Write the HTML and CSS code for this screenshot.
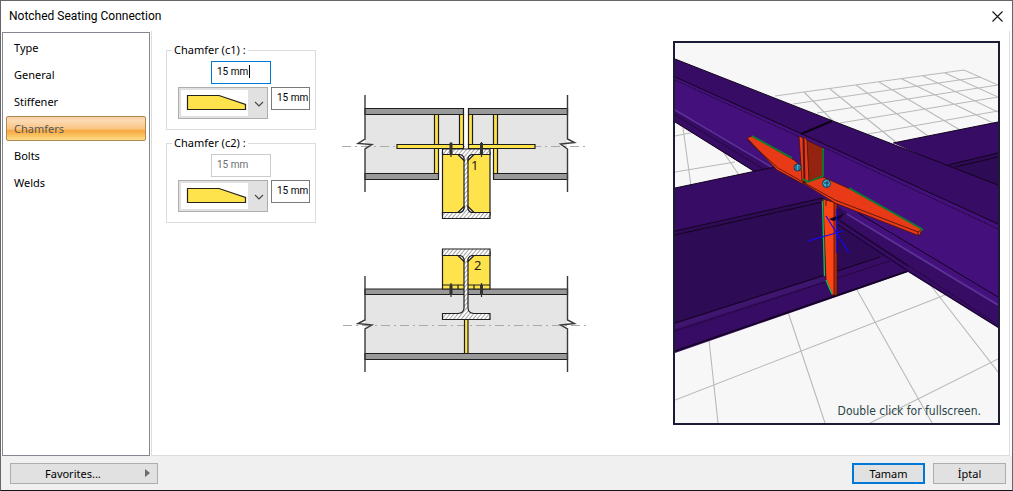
FILE: index.html
```html
<!DOCTYPE html>
<html lang="en">
<head>
<meta charset="utf-8">
<title>Notched Seating Connection</title>
<link rel="stylesheet" href="styles.css">
</head>
<body>
<div class="dialog">
  <header class="titlebar">
    <h1 class="title">Notched Seating Connection</h1>
    <button class="close" type="button" aria-label="Close">
      <svg width="11" height="11" viewBox="0 0 11 11"><path d="M.5 .5 10.500 10.500M10.500 .5 .5 10.500" fill="none" stroke="#111" stroke-width="1.100"/></svg>
    </button>
  </header>
  <div class="body">
    <nav class="sidebar">
      <button class="tab" type="button">Type</button>
      <button class="tab" type="button">General</button>
      <button class="tab" type="button">Stiffener</button>
      <button class="tab selected" type="button" aria-current="page">Chamfers</button>
      <button class="tab" type="button">Bolts</button>
      <button class="tab" type="button">Welds</button>
    </nav>
    <main class="page">
      <form class="groups">
        <fieldset class="group">
          <legend>Chamfer (c1) :</legend>
          <div class="field main-field focused"><input type="text" value="15 mm" aria-label="Chamfer c1 size"><span class="caret"></span></div>
          <div class="row">
            <div class="combo">
              <select aria-label="Chamfer c1 shape"><option aria-label="Straight"></option></select>
              <svg class="face" viewBox="0 0 90 32"><path fill="#fff" d="M3 3H70V29H3z"/><path d="M9.500 8.500H41L67.500 17.500V22.500H9.500z" fill="#ffe34d" stroke="#24221a" stroke-width="1.200"/><path d="M77 15l4 4 4-4" fill="none" stroke="#444" stroke-width="1.100"/></svg>
            </div>
            <div class="field side-field"><input type="text" value="15 mm" aria-label="Chamfer c1 height"></div>
          </div>
        </fieldset>
        <fieldset class="group">
          <legend>Chamfer (c2) :</legend>
          <div class="field main-field"><input type="text" value="15 mm" aria-label="Chamfer c2 size" disabled></div>
          <div class="row">
            <div class="combo">
              <select aria-label="Chamfer c2 shape"><option aria-label="Straight"></option></select>
              <svg class="face" viewBox="0 0 90 32"><path fill="#fff" d="M3 3H70V29H3z"/><path d="M9.500 8.500H41L67.500 17.500V22.500H9.500z" fill="#ffe34d" stroke="#24221a" stroke-width="1.200"/><path d="M77 15l4 4 4-4" fill="none" stroke="#444" stroke-width="1.100"/></svg>
            </div>
            <div class="field side-field"><input type="text" value="15 mm" aria-label="Chamfer c2 height"></div>
          </div>
        </fieldset>
      </form>
      <div class="diagram">
        <svg width="250" height="290" viewBox="340 90 250 290" role="img" aria-label="Connection sections 1 and 2">
          <defs>
            <pattern id="hatch" width="3" height="3" patternUnits="userSpaceOnUse" patternTransform="rotate(40)"><path fill="#fff" d="M0 0H3V3H0z"/><path stroke="#333" stroke-width=".9" d="M0 0V3"/></pattern>
          </defs>
          <g stroke="#1e1e1e" stroke-width="1.200">
            <path fill="#e5e5e5" stroke="none" d="M365 114H463V146H438V174H365zM469 114H567V174H494V146H469z"/>
            <path fill="#999" d="M365 108.500H463.500V114.500H365zM468.500 108.500H567.500V114.500H468.500zM365 173.500H438.500V179.500H365zM493.500 173.500H567.500V179.500H493.500z"/>
            <path fill="#ffe34d" d="M434.500 114.500H438.500V173.500H434.500zM459.500 114.500H463.500V144.500H459.500zM468.500 114.500H472.500V144.500H468.500zM493.500 114.500H497.500V173.500H493.500z"/>
            <path fill="none" stroke="#aaa" stroke-width="1" stroke-dasharray="9 4 2 4" d="M342 146.500H587"/>
            <path fill="#ffe34d" d="M397 144.500H463.500V148.500H397zM468.500 144.500H535V148.500H468.500z"/>
            <path fill="#ffe34d" d="M442.500 152H490V215H442.500z"/>
            <path fill="url(#hatch)" d="M442.500 149H490V154.500H474Q468 155 468 161V206Q468 212 474 212.500H490V218.500H442.500V212.500H458Q464 212 464 206V161Q464 155 458 154.500H442.500z"/>
            <path fill="#fff" d="M458 154.500 464 160.500V158Q463 155 460 154.500zM474 154.500 468 160.500V158Q469 155 472 154.500zM458 212.500 464 206.500V209Q463 212 460 212.500zM474 212.500 468 206.500V209Q469 212 472 212.500z"/>
            <path stroke="#333" stroke-width="3" d="M451 143V155M481.500 143V155"/>
            <path stroke="#333" stroke-width="1.200" d="M451 142V157M481.500 142V157"/>
            <g fill="none" stroke="#3a3a3a" stroke-width="1.400"><path d="M365 95V139L358 143.500 372 144.500 365 149V192M567.500 95V139L574.500 142.500 560.500 144 567.500 149V192"/></g>
          </g>
          <g stroke="#1e1e1e" stroke-width="1.200">
            <path fill="#e5e5e5" stroke="none" d="M365 294H567V354H365z"/>
            <path fill="none" stroke="#aaa" stroke-width="1" stroke-dasharray="9 4 2 4" d="M343 325.500H587"/>
            <path fill="#999" d="M365 289H567.500V294.500H365zM365 353.500H567.500V359.500H365z"/>
            <path fill="#ffe34d" d="M442.500 252H490V285H442.500zM442.500 285H490V289H442.500zM464.500 319.500H468V353.500H464.500z"/>
            <path d="M458 285V289M474 285V289"/>
            <path fill="url(#hatch)" d="M442.500 249H490V255.500H474Q468 256 468 262V308Q468 313 474 313.500H490V319.500H442.500V313.500H458Q464 313 464 308V262Q464 256 458 255.500H442.500z"/>
            <path fill="#fff" d="M458 255.500 464 261.500V259Q463 256 460 255.500zM474 255.500 468 261.500V259Q469 256 472 255.500z"/>
            <path stroke="#333" stroke-width="3" d="M451 285V295M481.500 285V295"/>
            <path stroke="#333" stroke-width="1.200" d="M451 283V297M481.500 283V297"/>
            <g fill="none" stroke="#3a3a3a" stroke-width="1.400"><path d="M365 276V320L358 323.500 372 325 365 329V372M567.500 276V320L574.500 323.500 560.500 325 567.500 329V372"/></g>
          </g>
          <text class="mark" x="471" y="170">1</text>
          <text class="mark" x="474" y="270">2</text>
        </svg>
      </div>
      <div class="viewport">
        <svg class="scene" viewBox="675 43 323 380" preserveAspectRatio="none" role="img" aria-label="3D view of the connection">
          <g fill="none" stroke="#b8bab8" stroke-width="1.100">
            <path d="M775 96 964 70 998 85M793 104 980 77M817 113 998 85M840 123 998 97M868 134 998 111M804 92 833 121M830 89 897 143M856 85 928 136M879 82 960 130M902 79 993 123M923 76 998 112M945 73 998 97"/>
            <path d="M675 136 700 131M675 172 735 162M683 128 691 186M722 150 741 178"/>
            <path d="M675 400 840 336 945 295M709 340 718 423M788 312 825 423M857 290 932 423M928 282 998 372M870 423 998 359"/>
          </g>
          <g stroke-width="1">
            <path fill="#370c64" d="M675 59 833 121 802 134 803 184 753 171 675 122z"/>
            <path fill="#43107c" d="M675 77 802 134V184L773 168 675 110z"/>
            <path fill="none" stroke="#5a3194" stroke-width="1.600" d="M675 110 773 168"/>
            <path fill="none" stroke="#14041f" d="M675 59 833 121M675 77 802 134M675 122 757 173"/>
            <path fill="none" stroke="#14041f" stroke-dasharray="1 1" d="M675 80 802 138M675 115 768 172"/>
            <path fill="#370c64" d="M675 188 775 167 835 200 860 220 908 272 675 353z"/>
            <path fill="#2e0b55" d="M675 231 835 195 890 254 837 272 675 323z"/>
            <path fill="#4a237a" opacity=".45" d="M675 324 825 276V281L675 329z"/>
            <path fill="none" stroke="#14041f" d="M675 188 775 167M675 231 823 198M675 235 823 202M675 323 825 275M837 271 880 257"/>
            <path fill="none" stroke="#14041f" stroke-dasharray="1 1" d="M675 331 890 261"/>
            <path fill="none" stroke="#12041d" stroke-width="1.500" d="M675 351 908 271"/>
            <path fill="#370c64" d="M893 143 998 122V190z"/>
            <path fill="#2e0b55" d="M948 165 998 153V190z"/>
            <path fill="none" stroke="#14041f" d="M893 143 998 122M948 165 998 153M955 167 998 157"/>
            <path fill="#370c64" d="M802 133 833 121 998 185V328L908 272 828 218 845 212 803 184z"/>
            <path fill="#43107c" d="M802 134 998 224V304L847 213 803 184z"/>
            <path fill="none" stroke="#5a3194" stroke-width="2" d="M847 214 998 305"/>
            <path fill="none" stroke="#14041f" d="M833 121 998 185M802 134 998 224M858 213 998 297M828 218 908 271 998 327M832 216 908 266"/>
            <path fill="none" stroke="#14041f" stroke-dasharray="1 1" d="M823 147 998 229M840 220 998 325"/>
            <path stroke="#0d0316" stroke-width="2" d="M801 134 832 121"/>
          </g>
          <g stroke="#491307" stroke-width=".8">
            <path fill="#fe4518" d="M823 199 836 203V295H832L826 279z"/>
            <path fill="#b32b0d" d="M834 203H837V295H834z"/>
            <path fill="#e93a17" d="M747 138 752 136 794 160 803 168V184L777 170z"/>
            <path fill="none" d="M747 140 778 168 803 182"/>
            <path fill="#94230f" d="M806 140 823 148V176L808 182z"/>
            <path fill="#e93a17" d="M799 136 803 138 804 182 802 181zM804 137 807 140 809 181 805 182z"/>
            <path fill="#e93a17" d="M803 183 823 177 850 189 922 229 920 235 917 235 835 203z"/>
            <path fill="none" stroke="#3b1007" d="M803 182 835 200 918 232 922 229M918 232V235M826 200V206"/>
          </g>
          <path fill="none" stroke="#088032" stroke-width="1.800" d="M752 136 792 158M823 148V176L808 182 803 179M849 188 922 229V231"/>
          <path fill="none" stroke="#12bc52" stroke-width="1.400" d="M822.500 201 824.500 276M826 280 832 294"/>
          <path fill="#170629" d="M829 219 845 213 840 219 833 221z"/>
          <g fill="#46a9cf" stroke="#0c3850">
            <circle cx="797.500" cy="167.500" r="3.500"/><circle cx="826.500" cy="183.500" r="4"/>
            <path fill="none" d="M796 165V170M799 166V171M824 183H829M827 181V187"/>
          </g>
          <path fill="none" stroke="#1008ff" stroke-width="1.100" d="M808 241 843 231M826 216 849 253M836.500 209V253"/>
        </svg>
        <p class="hint">Double click for fullscreen.</p>
      </div>
    </main>
  </div>
  <footer class="footer">
    <button class="btn favorites" type="button"><span>Favorites...</span><svg width="5" height="8" viewBox="0 0 5 8"><path d="M0 0 5 4 0 8z" fill="#6b6b6b"/></svg></button>
    <div class="actions">
      <button class="btn primary" type="submit">Tamam</button>
      <button class="btn" type="button">İptal</button>
    </div>
  </footer>
</div>
</body>
</html>
```
FILE: styles.css
```css
* { box-sizing: border-box; }
body {
  margin: 0;
  font-family: "Noto Sans", "Open Sans", sans-serif;
  font-size: 11px;
  color: #000;
}
button, input, select { font: inherit; color: inherit; }
.dialog {
  display: flex;
  flex-direction: column;
  min-height: 100vh;
  background: #f0f0f0;
  border: 1px solid #666;
  border-bottom-color: #151219;
}
.titlebar {
  display: flex;
  justify-content: space-between;
  align-items: center;
  height: 30px;
  padding: 0 9px 0 8px;
  background: #fff;
}
.title { margin: 0; font-family: Roboto, "Noto Sans", sans-serif; font-size: 12px; font-weight: 400; }
.close { display: flex; padding: 0; border: 0; background: none; }
.body { display: flex; flex: 1; background: #fff; }
.sidebar {
  display: flex;
  flex-direction: column;
  gap: 2px;
  width: 148px;
  margin: 1px 1px 0 1px;
  padding: 2px 3px;
  border: 1px solid #828790;
}
.tab {
  height: 25px;
  padding: 0 7px;
  border: 1px solid transparent;
  border-radius: 2px;
  background: none;
  text-align: left;
}
.tab.selected {
  border-color: #b08a55;
  background: linear-gradient(#f5cda3 0, #fcdab4 15%, #fac684 50%, #f8a740 60%, #fbc969 85%, #fddb89 100%);
  color: #555;
}
.page {
  display: flex;
  flex: 1;
  justify-content: space-between;
  margin-right: 2px;
  padding: 10px 9px 30px 14px;
  border: solid #dcdcdc;
  border-width: 0 1px 1px;
}
.groups { display: flex; flex-direction: column; gap: 5px; width: 150px; padding-top: 1px; }
.group {
  min-width: 0;
  height: 88px;
  margin: 0;
  padding: 3px 5px 0 11px;
  border: 1px solid #dcdcdc;
}
.group legend { padding: 0 2px; margin-left: -6px; line-height: 16px; }
.row { display: flex; gap: 3px; margin-top: 3px; }
.field { position: relative; border: 1px solid #7a7a7a; height: 23px; background: #fff; }
.field input {
  display: block;
  width: 100%;
  height: 19px;
  padding: 0 0 0 5px;
  border: 0;
  outline: 0;
  background: none;
  font-family: Roboto, "Noto Sans", sans-serif;
  font-size: 10px;
}
.main-field { width: 60px; margin-left: 33px; }
.main-field:has(input:disabled) { border-color: #ccc; }
.field input:disabled { color: #6d6d6d; }
.focused { border-color: #0078d7; }
.caret { position: absolute; left: 37px; top: 3px; width: 1px; height: 13px; background: #000; }
.side-field { flex: 1; }
.combo { display: grid; width: 90px; height: 32px; }
.combo > * { grid-area: 1 / 1; width: 90px; height: 32px; }
.combo select { appearance: none; border: 1px solid #adadad; background: #e1e1e1; }
.face { pointer-events: none; z-index: 1; }
.diagram { padding-top: 49px; margin-right: 60px; }
.mark { font-size: 13px; fill: #222; }
.viewport { position: relative; width: 327px; border: 2px solid #1a1b35; background: #f7f7f7; }
.scene { display: block; width: 100%; height: 100%; }
.hint {
  position: absolute;
  right: 17px;
  bottom: 4px;
  margin: 0;
  font-family: "DejaVu Sans Condensed", "Noto Sans", sans-serif;
  font-size: 12px;
  line-height: 16px;
  color: #2a4548;
}
.footer { display: flex; justify-content: space-between; align-items: center; height: 34px; padding: 0 6px 0 9px; }
.actions { display: flex; gap: 8px; }
.btn { width: 73px; height: 21px; padding: 0; border: 1px solid #adadad; background: #e1e1e1; }
.primary { border: 2px solid #0078d7; }
.favorites { display: flex; align-items: center; justify-content: space-between; width: 148px; padding: 0 7px 0 34px; }
```
